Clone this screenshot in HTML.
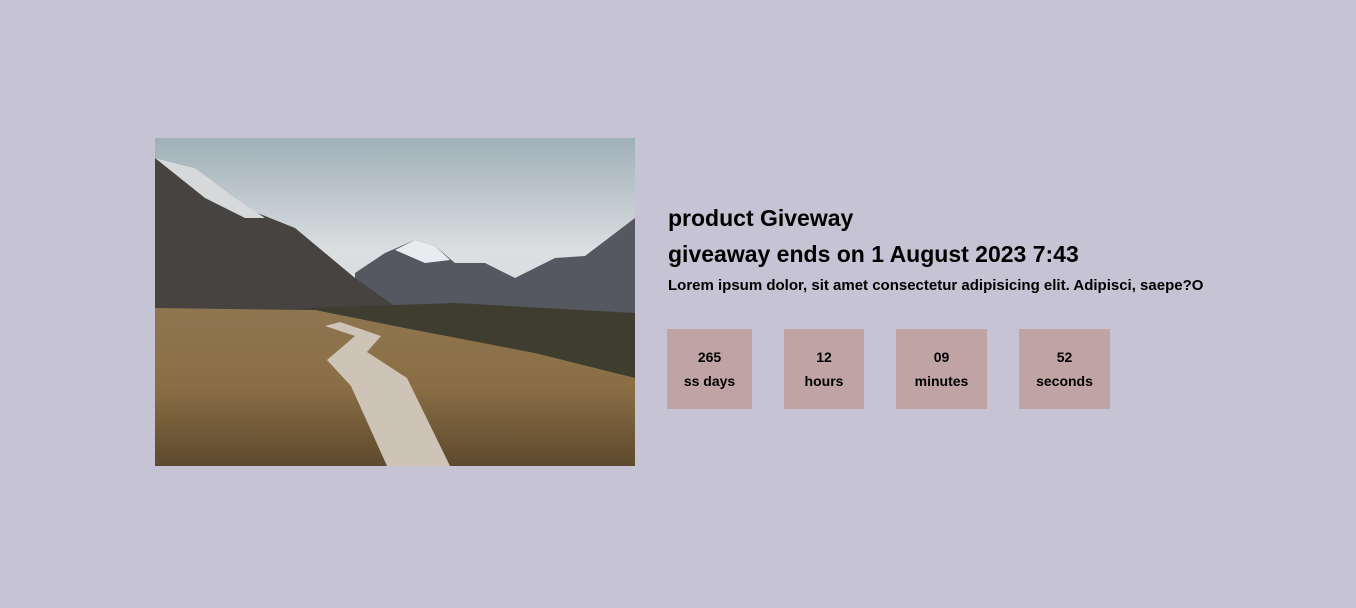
<!DOCTYPE html>
<html><head><style>
body{margin:0;width:1356px;height:608px;background:#c6c4d4;font-family:"Liberation Sans",sans-serif;position:relative;overflow:hidden}
.img{position:absolute;left:155px;top:138px;width:480px;height:328px}
.t{position:absolute;left:668px;font-weight:bold;color:#000;white-space:nowrap}
.box{position:absolute;top:329px;height:80px;background:#c0a4a4;text-align:center;font-weight:bold;font-size:14px;line-height:24px;padding-top:16px;box-sizing:border-box}
</style></head><body>
<svg class="img" viewBox="0 0 480 328" preserveAspectRatio="none">
<defs>
<linearGradient id="sky" x1="0" y1="0" x2="0" y2="1"><stop offset="0" stop-color="#9fb0b8"/><stop offset=".35" stop-color="#dcdfe0"/><stop offset="1" stop-color="#c4d2d9"/></linearGradient>
<linearGradient id="gr" x1="0" y1="0" x2="0" y2="1"><stop offset="0" stop-color="#8f7650"/><stop offset=".5" stop-color="#8a6e45"/><stop offset="1" stop-color="#5e4a2e"/></linearGradient>
</defs>
<rect width="480" height="328" fill="url(#sky)"/>
<polygon points="200,135 230,115 260,102 280,108 300,125 330,125 360,140 400,120 430,118 480,80 480,190 200,190" fill="#55585f"/>
<polygon points="240,112 260,102 280,108 295,122 270,125" fill="#e8ecef"/>
<polygon points="0,20 40,30 90,70 140,90 200,140 250,175 0,190" fill="#474341"/>
<polygon points="0,20 40,30 80,60 110,80 90,80 50,60" fill="#d6d8da"/>
<polygon points="0,170 150,172 300,172 480,178 480,328 0,328" fill="url(#gr)"/>
<polygon points="150,170 300,165 480,175 480,240 380,215 260,192" fill="#3f3d30"/>
<polygon points="170,188 200,198 172,222 196,248 232,328 295,328 252,240 212,214 226,198 185,184" fill="#cdc3b7"/>
</svg>
<div class="t" style="top:205px;font-size:23px">product Giveway</div>
<div class="t" style="top:241px;font-size:23px">giveaway ends on 1 August 2023 7:43</div>
<div class="t" style="top:277px;font-size:15px">Lorem ipsum dolor, sit amet consectetur adipisicing elit. Adipisci, saepe?O</div>
<div class="box" style="left:667px;width:85px">265<br>ss days</div>
<div class="box" style="left:784px;width:80px">12<br>hours</div>
<div class="box" style="left:896px;width:91px">09<br>minutes</div>
<div class="box" style="left:1019px;width:91px">52<br>seconds</div>
</body></html>
